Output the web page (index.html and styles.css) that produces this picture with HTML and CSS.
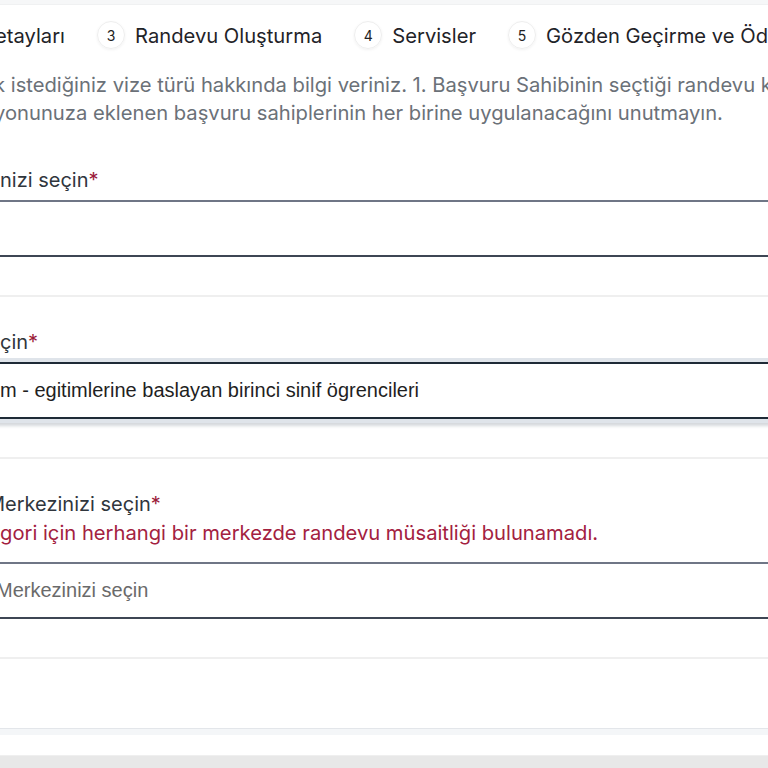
FILE: index.html
```html
<!DOCTYPE html>
<html lang="tr">
<head>
<meta charset="utf-8">
<title>Randevu Oluşturma</title>
<link rel="stylesheet" href="styles.css">
</head>
<body>
<div class="topband"></div>
<div class="page">
  <nav class="stepper">
    <div class="step"><span class="step-label">etayları</span></div>
    <div class="step"><span class="step-num">3</span><span class="step-label">Randevu Oluşturma</span></div>
    <div class="step"><span class="step-num">4</span><span class="step-label">Servisler</span></div>
    <div class="step"><span class="step-num">5</span><span class="step-label">Gözden Geçirme ve Ödeme</span></div>
  </nav>
  <p class="intro">k istediğiniz vize türü hakkında bilgi veriniz. 1. Başvuru Sahibinin seçtiği randevu kategorisinin<br>yonunuza eklenen başvuru sahiplerinin her birine uygulanacağını unutmayın.</p>

  <section class="field first">
    <div class="label">nizi seçin<span class="req">*</span></div>
    <div class="select"></div>
  </section>

  <section class="field">
    <div class="label">çin<span class="req">*</span></div>
    <div class="select focused"><span class="value">m - egitimlerine baslayan birinci sinif ögrencileri</span></div>
  </section>

  <section class="field">
    <div class="label shifted">Merkezinizi seçin<span class="req">*</span></div>
    <div class="error">gori için herhangi bir merkezde randevu müsaitliği bulunamadı.</div>
    <div class="select"><span class="placeholder">Merkezinizi seçin</span></div>
  </section>

  <section class="field empty"></section>
</div>
<footer class="footer">
  <div class="footer-band"></div>
  <div class="footer-bottom"></div>
</footer>
</body>
</html>
```
FILE: styles.css
```css
html, body {
  margin: 0;
  padding: 0;
  background: #ffffff;
  overflow: hidden;
}
body {
  font-family: Inter, "Noto Sans", "DejaVu Sans", sans-serif;
  color: #2f353c;
  width: 768px;
  height: 768px;
}
.topband {
  height: 4px;
  background: #f6f7f8;
  border-bottom: 1px solid #f0f1f2;
}
.page {
  margin: 0 -40px;
}
.stepper {
  display: flex;
  align-items: center;
  gap: 32px;
  height: 60px;
  padding-left: 35px;
  white-space: nowrap;
}
.step {
  display: flex;
  align-items: center;
  gap: 10px;
}
.step-num {
  width: 26px;
  height: 26px;
  border-radius: 50%;
  border: 1px solid #eeeeee;
  box-shadow: 0 1px 3px rgba(0,0,0,0.06);
  display: flex;
  align-items: center;
  justify-content: center;
  font-size: 14px;
  color: #222;
}
.step-label {
  font-size: 20.2px;
  color: #1f2328;
}
.intro {
  margin: 6px 0 0;
  padding-left: 34px;
  font-size: 20.2px;
  line-height: 28px;
  color: #6b7178;
  white-space: nowrap;
}
.field {
  padding: 31px 0 38px;
  border-top: 2px solid #efefef;
}
.field.first {
  border-top: none;
  padding-top: 39px;
}
.label {
  padding-left: 40px;
  font-size: 20px;
  line-height: 28px;
  color: #30363d;
  white-space: nowrap;
}
.label.shifted {
  padding-left: 27px;
}
.req {
  color: #9b1b3a;
}
.error {
  padding-left: 40px;
  font-size: 20.2px;
  line-height: 30px;
  color: #a3213f;
  margin-bottom: 14px;
  white-space: nowrap;
}
.select {
  margin-top: 6px;
  height: 53px;
  border-top: 2px solid #6f7686;
  border-bottom: 2px solid #3e4654;
  border-left: 2px solid #6f7686;
  border-right: 2px solid #6f7686;
  background: #fff;
  display: flex;
  align-items: center;
  padding-left: 38px;
  font-family: "Liberation Sans", Arial, sans-serif;
  font-size: 20px;
  white-space: nowrap;
}
.select.focused {
  border-color: #1e2a36;
  box-shadow: 0 0 0 4px #dfe4ea, 0 4px 3px 3px #d6d9dd;
}
.value {
  color: #1f1f1f;
}
.placeholder {
  color: #6a6a6a;
  margin-left: -4px;
}
.field.empty {
  height: 30px;
  padding: 0;
}
.footer {
  margin-top: 39px;
  border-top: 1px solid #e3e6ea;
}
.footer-band {
  height: 6px;
  background: #f4f6f8;
}
.footer-bottom {
  margin-top: 20px;
  height: 14px;
  background: #e8e8e8;
  border-top: 1px solid #efefef;
}
```
